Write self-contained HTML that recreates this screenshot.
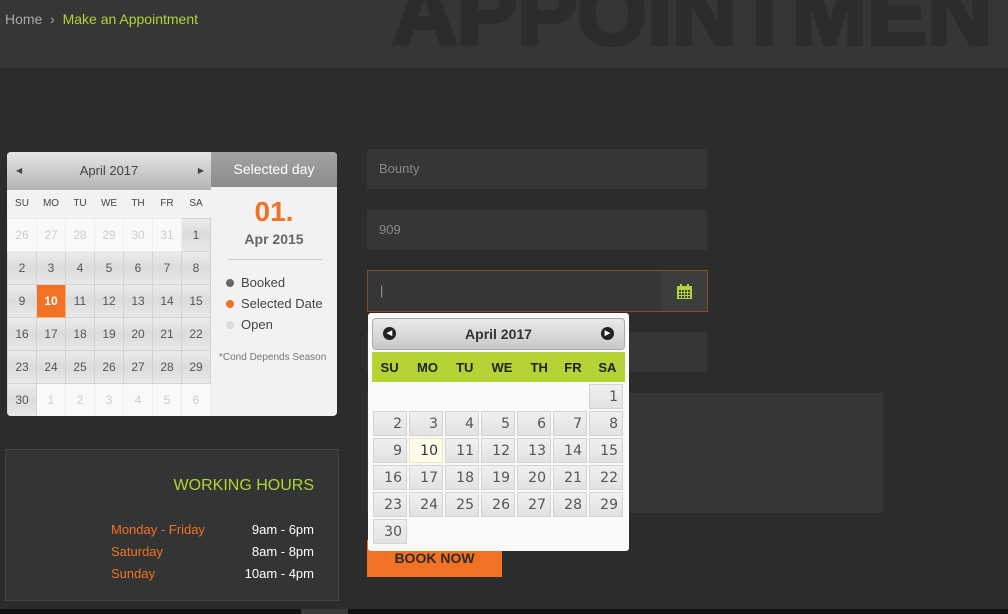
<!DOCTYPE html>
<html><head><meta charset="utf-8">
<style>
*{margin:0;padding:0;box-sizing:border-box}
body{width:1008px;height:614px;overflow:hidden;background:#2b2c2c;font-family:"Liberation Sans",sans-serif;position:relative}
.abs{position:absolute}
.hdr{left:0;top:0;width:1008px;height:68px;background:#353636;overflow:hidden}
.big{left:392px;top:-31px;font-size:90px;line-height:90px;font-weight:900;color:#2b2c2c;white-space:nowrap;font-family:"Liberation Sans",sans-serif;-webkit-text-stroke:4px #2b2c2c}
.bc{left:5px;top:11px;font-size:14px;color:#aaa}
.bc b{font-weight:normal;color:#b5d334}
.cal{left:7px;top:152px;width:330px;height:264px;background:#f2f2f2;border-radius:4px;overflow:hidden}
.ch{left:0;top:0;width:204px;height:38px;background:linear-gradient(#e6e6e6,#b3b3b3);font-size:13px;color:#444;text-align:center;line-height:38px}
.sh{left:204px;top:0;width:126px;height:35px;background:linear-gradient(#a3a3a3,#8b8b8b);color:#fff;font-size:14px;text-align:center;line-height:35px}
table{border-collapse:collapse}
.lt{left:0;top:38px;width:204px}
.lt td{width:29px;height:33px;text-align:center;font-size:12px;color:#555;border:1px solid #d2d2d2;background:linear-gradient(#ececec,#dcdcdc 50%,#e8e8e8)}
.lt tr.dn td{height:28px;font-size:10px;background:#f2f2f2;border:none;color:#444}
.lt td.o{background:#f9f9f9;color:#ccc;border-color:#eee}
.lt td.s{background:#f37124;color:#fff;font-weight:bold;border:1px solid #f7b27a}
.wh{left:5px;top:449px;width:334px;height:152px;background:#333434;border:1px solid #444}
.pop{left:368px;top:313px;width:261px;height:238px;background:#fafafa;border-radius:3px}
.ph{left:4px;top:5px;width:253px;height:32px;background:linear-gradient(#eaeaea,#c8c8c8);border:1px solid #aaa;border-radius:4px;text-align:center;line-height:30px;font-size:14px;font-weight:bold;color:#333}
.pg{left:4px;top:39px;width:253px;height:30px;background:#b5d334}
.rt{left:3px;top:69px;border-collapse:separate;border-spacing:2px}
.rt td{width:34px;height:25px;text-align:right;padding-right:4px;font-size:14px;color:#555;border:1px solid #d3d3d3;background:linear-gradient(#f0f0f0,#e2e2e2);font-family:"DejaVu Sans",sans-serif}
.rt td.e{border:none;background:none}
.rt td.t{background:#fffbea;border-color:#f2e6b4;color:#333}
.inp{background:#353636;color:#888;font-size:13px;padding-left:12px}
.dot{display:inline-block;width:8px;height:8px;border-radius:50%;margin-right:7px}
</style></head><body>
<div class="abs hdr"><div class="abs big">APPOINTMENT</div>
<div class="abs bc">Home &nbsp;›&nbsp; <b>Make an Appointment</b></div></div>

<div class="abs cal">
<div class="abs ch"><span style="position:absolute;left:9px;font-size:8px">◀</span>April 2017<span style="position:absolute;right:7px;font-size:8px">▶</span></div>
<div class="abs sh">Selected day</div>
<table class="abs lt">
<tr class="dn"><td>SU</td><td>MO</td><td>TU</td><td>WE</td><td>TH</td><td>FR</td><td>SA</td></tr>
<tr><td class="o">26</td><td class="o">27</td><td class="o">28</td><td class="o">29</td><td class="o">30</td><td class="o">31</td><td>1</td></tr>
<tr><td>2</td><td>3</td><td>4</td><td>5</td><td>6</td><td>7</td><td>8</td></tr>
<tr><td>9</td><td class="s">10</td><td>11</td><td>12</td><td>13</td><td>14</td><td>15</td></tr>
<tr><td>16</td><td>17</td><td>18</td><td>19</td><td>20</td><td>21</td><td>22</td></tr>
<tr><td>23</td><td>24</td><td>25</td><td>26</td><td>27</td><td>28</td><td>29</td></tr>
<tr><td>30</td><td class="o">1</td><td class="o">2</td><td class="o">3</td><td class="o">4</td><td class="o">5</td><td class="o">6</td></tr>
</table>
<div class="abs" style="left:204px;top:44px;width:126px;text-align:center;color:#f37124;font-size:28px;font-weight:bold">01.</div>
<div class="abs" style="left:204px;top:79px;width:126px;text-align:center;color:#666;font-size:14px;font-weight:bold">Apr 2015</div>
<div class="abs" style="left:221px;top:107px;width:94px;height:1px;background:#ccc"></div>
<div class="abs" style="left:219px;top:120px;font-size:13px;color:#444;line-height:21px">
<div><span class="dot" style="background:#666"></span>Booked</div>
<div><span class="dot" style="background:#f37124"></span>Selected Date</div>
<div><span class="dot" style="background:#ddd"></span>Open</div></div>
<div class="abs" style="left:212px;top:200px;font-size:10px;color:#777">*Cond Depends Season</div>
</div>

<div class="abs wh">
<div class="abs" style="right:24px;top:27px;color:#b5d334;font-size:16px">WORKING HOURS</div>
<div class="abs" style="left:105px;top:69px;color:#f37124;font-size:13px;line-height:22px">Monday - Friday<br>Saturday<br>Sunday</div>
<div class="abs" style="right:24px;top:69px;color:#fff;font-size:13px;line-height:22px;text-align:right">9am - 6pm<br>8am - 8pm<br>10am - 4pm</div>
</div>

<div class="abs inp" style="left:367px;top:149px;width:340px;height:40px;line-height:40px">Bounty</div>
<div class="abs inp" style="left:367px;top:210px;width:340px;height:40px;line-height:40px">909</div>
<div class="abs inp" style="left:367px;top:270px;width:341px;height:42px;border:1px solid #8a4a26;line-height:40px;color:#999">|
<div class="abs" style="right:0;top:0;width:45px;height:40px;background:#3c3d3d">
<svg class="abs" style="left:15px;top:13px" width="15" height="15" viewBox="0 0 15 15"><rect x="0" y="2" width="15" height="13" fill="#b5d334"/><rect x="3" y="0" width="2" height="4" fill="#b5d334"/><rect x="10" y="0" width="2" height="4" fill="#b5d334"/><g fill="#3c3d3d"><rect x="2" y="6" width="2" height="2"/><rect x="5" y="6" width="2" height="2"/><rect x="8" y="6" width="2" height="2"/><rect x="11" y="6" width="2" height="2"/><rect x="2" y="9" width="2" height="2"/><rect x="5" y="9" width="2" height="2"/><rect x="8" y="9" width="2" height="2"/><rect x="11" y="9" width="2" height="2"/><rect x="2" y="12" width="2" height="2"/><rect x="5" y="12" width="2" height="2"/><rect x="8" y="12" width="2" height="2"/><rect x="11" y="12" width="2" height="2"/></g></svg></div></div>
<div class="abs inp" style="left:367px;top:332px;width:340px;height:40px"></div>
<div class="abs inp" style="left:367px;top:393px;width:516px;height:120px"></div>
<div class="abs" style="left:367px;top:540px;width:135px;height:37px;background:#f37124;color:#2b2c2c;font-weight:bold;font-size:14px;text-align:center;line-height:37px">BOOK NOW</div>

<div class="abs pop">
<div class="abs ph"><span style="position:absolute;left:10px;top:8px;width:13px;height:13px;border-radius:50%;background:#222;color:#fff;font-size:7px;line-height:13px">◀</span>April 2017<span style="position:absolute;right:10px;top:8px;width:13px;height:13px;border-radius:50%;background:#222;color:#fff;font-size:7px;line-height:13px">▶</span></div>
<div class="abs pg"><table style="width:253px;height:30px"><tr style="font-size:13px;font-weight:bold;color:#222;text-align:center"><td>SU</td><td>MO</td><td>TU</td><td>WE</td><td>TH</td><td>FR</td><td>SA</td></tr></table></div>
<table class="abs rt">
<tr><td class="e"></td><td class="e"></td><td class="e"></td><td class="e"></td><td class="e"></td><td class="e"></td><td>1</td></tr>
<tr><td>2</td><td>3</td><td>4</td><td>5</td><td>6</td><td>7</td><td>8</td></tr>
<tr><td>9</td><td class="t">10</td><td>11</td><td>12</td><td>13</td><td>14</td><td>15</td></tr>
<tr><td>16</td><td>17</td><td>18</td><td>19</td><td>20</td><td>21</td><td>22</td></tr>
<tr><td>23</td><td>24</td><td>25</td><td>26</td><td>27</td><td>28</td><td>29</td></tr>
<tr><td>30</td><td class="e"></td><td class="e"></td><td class="e"></td><td class="e"></td><td class="e"></td><td class="e"></td></tr>
</table>
</div>

<div class="abs" style="left:0;top:609px;width:1008px;height:5px;background:#111"></div>
<div class="abs" style="left:301px;top:609px;width:47px;height:5px;background:#3a3a3a"></div>
</body></html>
